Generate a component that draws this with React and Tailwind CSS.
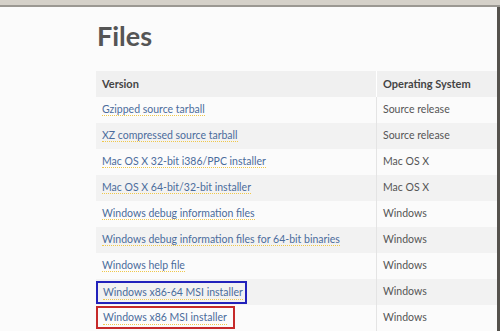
import React from "react"

const rows = [
  { name: "Gzipped source tarball", os: "Source release" },
  { name: "XZ compressed source tarball", os: "Source release" },
  { name: "Mac OS X 32-bit i386/PPC installer", os: "Mac OS X" },
  { name: "Mac OS X 64-bit/32-bit installer", os: "Mac OS X" },
  { name: "Windows debug information files", os: "Windows" },
  { name: "Windows debug information files for 64-bit binaries", os: "Windows" },
  { name: "Windows help file", os: "Windows" },
  { name: "Windows x86-64 MSI installer", os: "Windows", box: "blue" },
  { name: "Windows x86 MSI installer", os: "Windows", box: "red" },
]

const Link = ({ children }) => (
  <span className="text-[#4b6c9c] border-b border-dotted border-[#f0c84a] leading-[14px]">{children}</span>
)

export default function App() {
  return (
    <div
      className="w-[500px] h-[331px] overflow-hidden flex flex-col bg-[#fbfbfb]"
      style={{ fontFamily: "Lato, 'Open Sans', sans-serif" }}
    >
      {/* window top bar */}
      <div className="h-[7px] shrink-0 bg-[#d5d1c9] border-b-2 border-[#9b9892]" />

      <div className="flex-1 flex border-r-[3px] border-[#55524d] border-b-2 border-b-[#3a3835] mb-[1px]">
        <div className="w-[96px] shrink-0" />
        <div className="flex-1 flex flex-col">
          <h1 className="text-[27px] font-bold text-[#555] leading-none mt-[15px] ml-[1px] h-[49px]">Files</h1>

          <div className="text-[10.5px]">
            {/* header */}
            <div className="flex h-[26px] bg-[#f0f0f0] text-[#444] font-bold text-[11px]">
              <div className="w-[281px] flex items-center pl-[6px] border-r border-white">Version</div>
              <div className="flex-1 flex items-center pl-[6px]">Operating System</div>
            </div>

            {rows.map((r, i) => (
              <div key={r.name} className={`flex h-[26px] ${i % 2 === 1 ? "bg-[#f2f2f2]" : "bg-[#fbfbfb]"}`}>
                <div className="w-[281px] flex items-center border-r border-[#e4e4e4]">
                  {r.box === "blue" ? (
                    <div className="h-[23px] mt-[1px] pl-[5px] pr-[2px] flex items-center border-2 border-[#2222bb]">
                      <Link>{r.name}</Link>
                    </div>
                  ) : r.box === "red" ? (
                    <div className="h-[23px] -mt-[1px] pl-[5px] pr-[6px] flex items-center border-2 border-[#c62a2a]">
                      <Link>{r.name}</Link>
                    </div>
                  ) : (
                    <div className="pl-[6px]">
                      <Link>{r.name}</Link>
                    </div>
                  )}
                </div>
                <div className="flex-1 flex items-center pl-[6px] text-[#555]">{r.os}</div>
              </div>
            ))}
          </div>
        </div>
      </div>
    </div>
  )
}
